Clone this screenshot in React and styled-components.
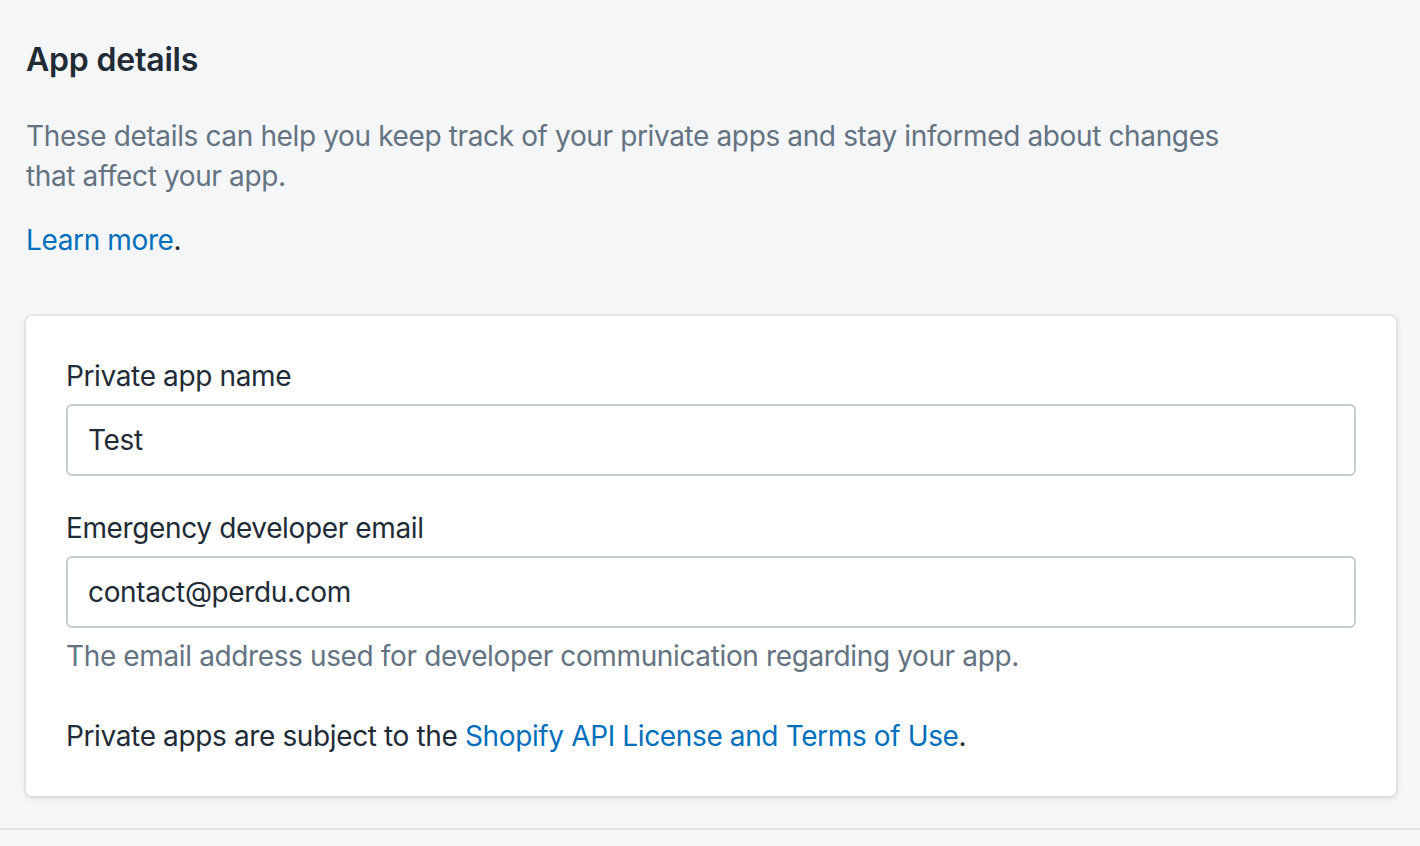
import styled, { createGlobalStyle } from "styled-components"

const GlobalStyle = createGlobalStyle`
    html, body {
        margin: 0;
        padding: 0;
        background: #f4f6f8;
    }
    body {
        font-family: Inter, "Noto Sans", "Liberation Sans", sans-serif;
        color: #212b36;
        letter-spacing: -0.37px;
        -webkit-font-smoothing: antialiased;
    }
`

const colors = {
    ink: "#212b36",
    subdued: "#637381",
    link: "#006fbb",
    border: "#c4cdd5",
    divider: "#dfe3e8",
}

const Page = styled.div`
    width: 1420px;
    min-height: 846px;
    background: #f4f6f8;
`

const Section = styled.section`
    display: flex;
    flex-direction: column;
    padding: 36px 24px 32px 26px;
    border-bottom: 2px solid ${colors.divider};
`

const Intro = styled.div`
    display: flex;
    flex-direction: column;
    gap: 24px;
    margin-bottom: 56px;
`

const Heading = styled.h2`
    margin: 0 0 8px;
    font-size: 32px;
    line-height: 48px;
    font-weight: 600;
    letter-spacing: -0.2px;
    color: ${colors.ink};
`

const Description = styled.p`
    margin: 0;
    max-width: 1220px;
    font-size: 28px;
    line-height: 40px;
    color: ${colors.subdued};
`

const Text = styled.p`
    margin: 0;
    font-size: 28px;
    line-height: 40px;
    color: ${colors.ink};
`

const Link = styled.a`
    color: ${colors.link};
    text-decoration: none;
`

const Card = styled.div`
    display: flex;
    flex-direction: column;
    gap: 32px;
    padding: 40px;
    background: #fff;
    border-radius: 6px;
    box-shadow: 0 0 0 2px rgba(63, 63, 68, 0.05), 0 2px 6px 0 rgba(63, 63, 68, 0.15);
`

const Field = styled.div`
    display: flex;
    flex-direction: column;
`

const Label = styled.label`
    font-size: 28px;
    line-height: 40px;
    color: ${colors.ink};
    margin-bottom: 8px;
`

const Input = styled.input`
    box-sizing: border-box;
    height: 72px;
    width: 100%;
    padding: 0 20px;
    border: 2px solid ${colors.border};
    border-radius: 6px;
    font-family: inherit;
    font-size: 28px;
    letter-spacing: inherit;
    color: ${colors.ink};
    background: #fff;
    outline: none;
`

const HelpText = styled.div`
    margin-top: 8px;
    font-size: 28px;
    line-height: 40px;
    color: ${colors.subdued};
`

const Terms = styled(Text)`
    margin-top: 8px;
`

const fields = [
    { label: "Private app name", value: "Test" },
    {
        label: "Emergency developer email",
        value: "contact@perdu.com",
        help: "The email address used for developer communication regarding your app.",
    },
]

function App() {
    return (
        <Page>
            <GlobalStyle />
            <Section>
                <Intro>
                    <Heading>App details</Heading>
                    <Description>
                        These details can help you keep track of your private apps and stay
                        informed about changes that affect your app.
                    </Description>
                    <Text>
                        <Link href="#">Learn more</Link>.
                    </Text>
                </Intro>
                <Card>
                    {fields.map((field) => (
                        <Field key={field.label}>
                            <Label>{field.label}</Label>
                            <Input defaultValue={field.value} readOnly />
                            {field.help && <HelpText>{field.help}</HelpText>}
                        </Field>
                    ))}
                    <Terms>
                        Private apps are subject to the{" "}
                        <Link href="#">Shopify API License and Terms of Use</Link>.
                    </Terms>
                </Card>
            </Section>
        </Page>
    )
}

export default App
